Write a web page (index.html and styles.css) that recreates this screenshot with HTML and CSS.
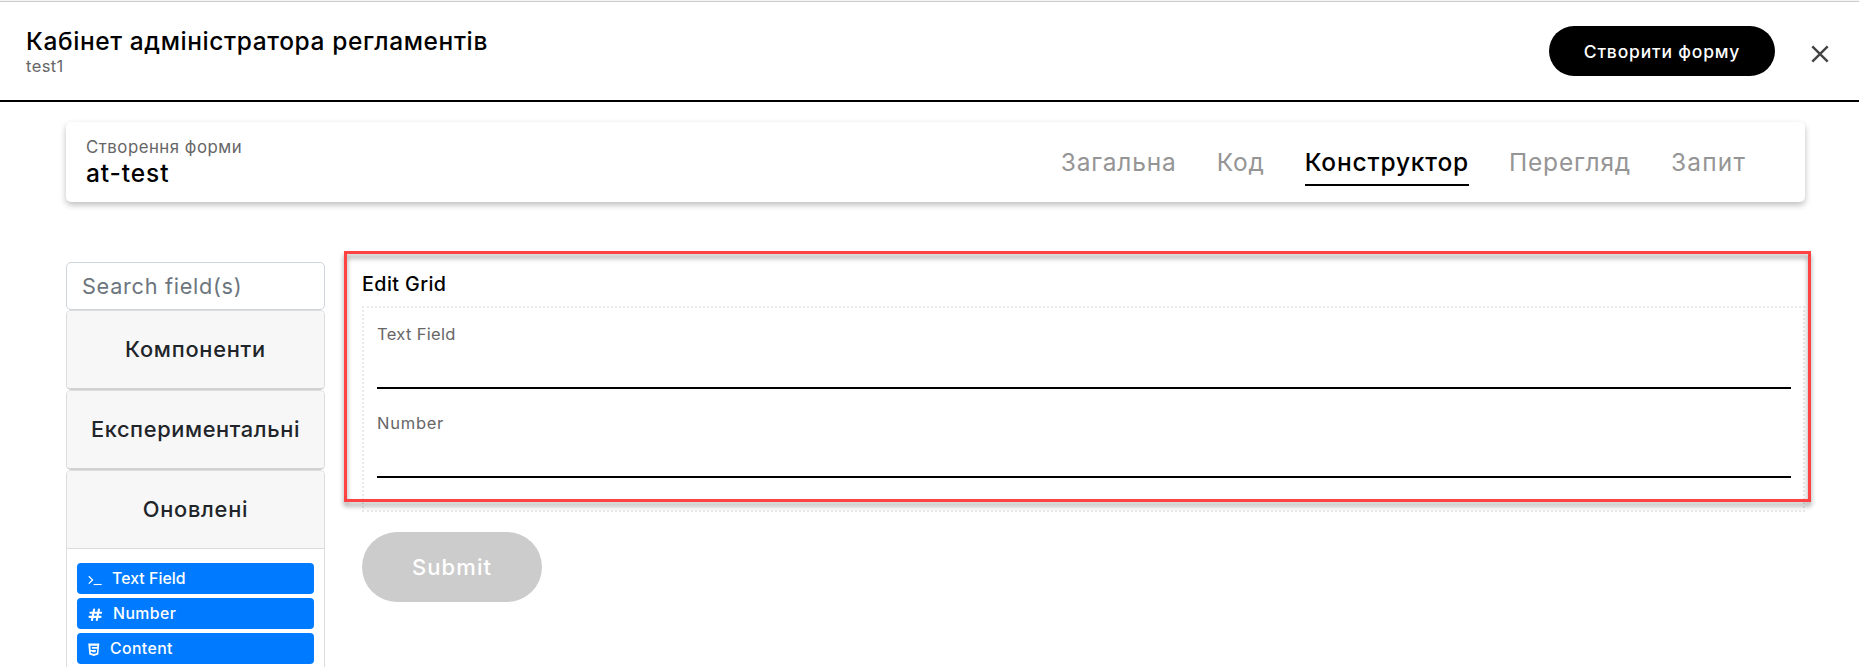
FILE: index.html
```html
<!DOCTYPE html>
<html lang="uk">
<head>
<meta charset="utf-8">
<title>Кабінет адміністратора регламентів</title>
<link rel="stylesheet" href="styles.css">
</head>
<body>
<header class="topbar">
  <div class="brand">
    <div class="brand-title">Кабінет адміністратора регламентів</div>
    <div class="brand-sub">test1</div>
  </div>
  <button class="create">Створити форму</button>
  <svg class="close" viewBox="0 0 18 18"><path d="M1.300 1.300l15.400 15.400M16.700 1.300L1.300 16.700" stroke="#444" stroke-width="2.4"/></svg>
</header>
<section class="form-card">
  <div class="form-name">
    <div class="form-caption">Створення форми</div>
    <div class="form-title">at-test</div>
  </div>
  <nav class="tabs">
    <a class="tab">Загальна</a>
    <a class="tab">Код</a>
    <a class="tab active">Конструктор</a>
    <a class="tab">Перегляд</a>
    <a class="tab tab-request">Запит</a>
  </nav>
</section>
<main class="builder">
  <aside class="sidebar">
    <div class="search">Search field(s)</div>
    <div class="group"><div class="group-head">Компоненти</div></div>
    <div class="group"><div class="group-head experimental">Експериментальні</div></div>
    <div class="group open">
      <div class="group-head">Оновлені</div>
      <div class="group-body">
        <div class="item item-text"><svg class="ico" viewBox="0 0 14 14"><path d="M.8 4.2l3.700 3.700L.8 11.600" fill="none" stroke="#fff" stroke-width="1.3"/><path d="M5.600 12.500H13.700" stroke="#fff" stroke-width="1.100"/></svg><span>Text Field</span></div>
        <div class="item item-number"><svg class="ico" viewBox="0 0 14 14"><path d="M6.100 2.500L4 13M10.900 2.500L8.800 13M2.400 5.700h11M1.500 9.900h11" fill="none" stroke="#fff" stroke-width="2.100" stroke-linecap="round"/></svg><span>Number</span></div>
        <div class="item item-content"><svg class="ico" viewBox="0 0 14 14"><path d="M.3 1.500h11l-1 10.900L5.800 14 1.300 12.400z" fill="#fff"/><path d="M9.200 4.300H3.100L3.300 7.400h5.300l-.3 3-2.500.8-2.400-.8-.1-.9" fill="none" stroke="#007bff" stroke-width="1.300"/></svg><span>Content</span></div>
      </div>
    </div>
  </aside>
  <section class="canvas">
    <h2 class="grid-title">Edit Grid</h2>
    <div class="edit-grid">
      <div class="field"><label>Text Field</label></div>
      <div class="field"><label class="label-number">Number</label></div>
    </div>
    <button class="submit">Submit</button>
    <div class="highlight"></div>
  </section>
</main>
</body>
</html>
```
FILE: styles.css
```css
* { box-sizing: border-box; }
body {
  margin: 0;
  height: 667px;
  overflow: hidden;
  background: #fff;
  color: #000;
  font-family: Inter, "Noto Sans", sans-serif;
  font-weight: 500;
}
button { border: 0; font-family: inherit; font-weight: 500; padding: 0; }
.topbar {
  display: flex;
  align-items: flex-start;
  height: 102px;
  padding: 0 30px 0 26px;
  border-top: 1px solid #f4f4f4;
  border-bottom: 2px solid #000;
  box-shadow: inset 0 1px 0 #ccc;
}
.brand { flex: 1; padding-top: 24px; }
.brand-title { height: 31px; font-size: 24.5px; line-height: 32px; letter-spacing: .6px; }
.brand-sub { height: 20px; font-size: 16.5px; line-height: 20px; font-weight: 400; letter-spacing: .4px; color: #666; }
.create {
  width: 226px;
  height: 50px;
  margin: 25px 36px 0 0;
  border-radius: 25px;
  background: #000;
  color: #fff;
  font-size: 17.5px;
  letter-spacing: .82px;
}
.close { width: 18px; height: 18px; margin-top: 44px; }
.form-card {
  display: flex;
  justify-content: space-between;
  height: 80px;
  margin: 20px 54px 0 66px;
  padding: 0 59px 0 20px;
  border-radius: 5px;
  box-shadow: 0 3px 6px rgba(0, 0, 0, .26);
}
.form-name { padding-top: 14px; }
.form-caption { height: 22px; font-size: 16.8px; line-height: 22px; font-weight: 400; letter-spacing: .5px; color: #666; }
.form-title { height: 30px; font-size: 24.5px; line-height: 31px; letter-spacing: .9px; }
.tabs { display: flex; gap: 40px; padding-top: 24px; }
.tab { height: 40px; line-height: 33px; font-size: 24.5px; letter-spacing: .82px; color: #959595; font-weight: 400; }
.tab.active { color: #000; font-weight: 500; border-bottom: 2px solid #000; }
.tab-request { letter-spacing: 1.15px; }
.builder { display: flex; align-items: flex-start; margin-top: 60px; padding-left: 66px; }
.sidebar { display: flex; flex-direction: column; width: 259px; height: 405px; }
.search {
  height: 48px;
  padding-left: 15px;
  border: 1px solid #ced4da;
  border-radius: 5px;
  font-size: 21.7px;
  line-height: 47px;
  letter-spacing: .7px;
  font-weight: 400;
  color: #6c757d;
}
.group { height: 80px; border: 1px solid #dcdcdc; border-bottom: 2px solid #d2d2d2; border-radius: 5px; overflow: hidden; }
.group-head { height: 78px; background: #f7f7f7; text-align: center; font-size: 21.8px; line-height: 77px; letter-spacing: .75px; color: #212529; }
.experimental { letter-spacing: .62px; }
.group.open { height: 197px; border-bottom: 0; border-radius: 5px 5px 0 0; }
.open .group-head { border-bottom: 1px solid #dcdcdc; }
.group-body { padding: 14px 10px 0; display: grid; gap: 4px; }
.item { display: flex; align-items: center; height: 31px; padding-left: 11px; border-radius: 4px; background: #007bff; color: #fff; font-size: 15.8px; }
.item-text { gap: 10px; letter-spacing: .07px; }
.item-number { gap: 11px; letter-spacing: .45px; }
.item-content { gap: 8px; letter-spacing: .4px; }
.ico { width: 14px; height: 14px; }
.canvas { position: relative; width: 1443px; margin-left: 37px; padding-top: 8px; }
.grid-title { margin: 0; height: 36px; font-size: 19.7px; font-weight: 500; line-height: 29px; letter-spacing: .42px; }
.edit-grid { height: 206px; padding: 15px 12px 0 13px; border: 2px dotted #e9e9e9; }
.field { height: 66px; margin-bottom: 23px; border-bottom: 2px solid #000; }
.field label { display: inline-block; font-size: 16.5px; line-height: 22px; font-weight: 400; letter-spacing: .33px; color: #666; }
.field .label-number { letter-spacing: .75px; }
.submit { display: block; width: 180px; height: 70px; margin-top: 20px; border-radius: 35px; background: #ccc; color: #fff; font-size: 22px; letter-spacing: 1.1px; }
.highlight {
  position: absolute;
  left: -18px;
  top: -11px;
  width: 1467px;
  height: 251px;
  border: 3px solid #ff4343;
  filter: drop-shadow(0 4px 2.5px rgba(0, 0, 0, .4));
}
```
